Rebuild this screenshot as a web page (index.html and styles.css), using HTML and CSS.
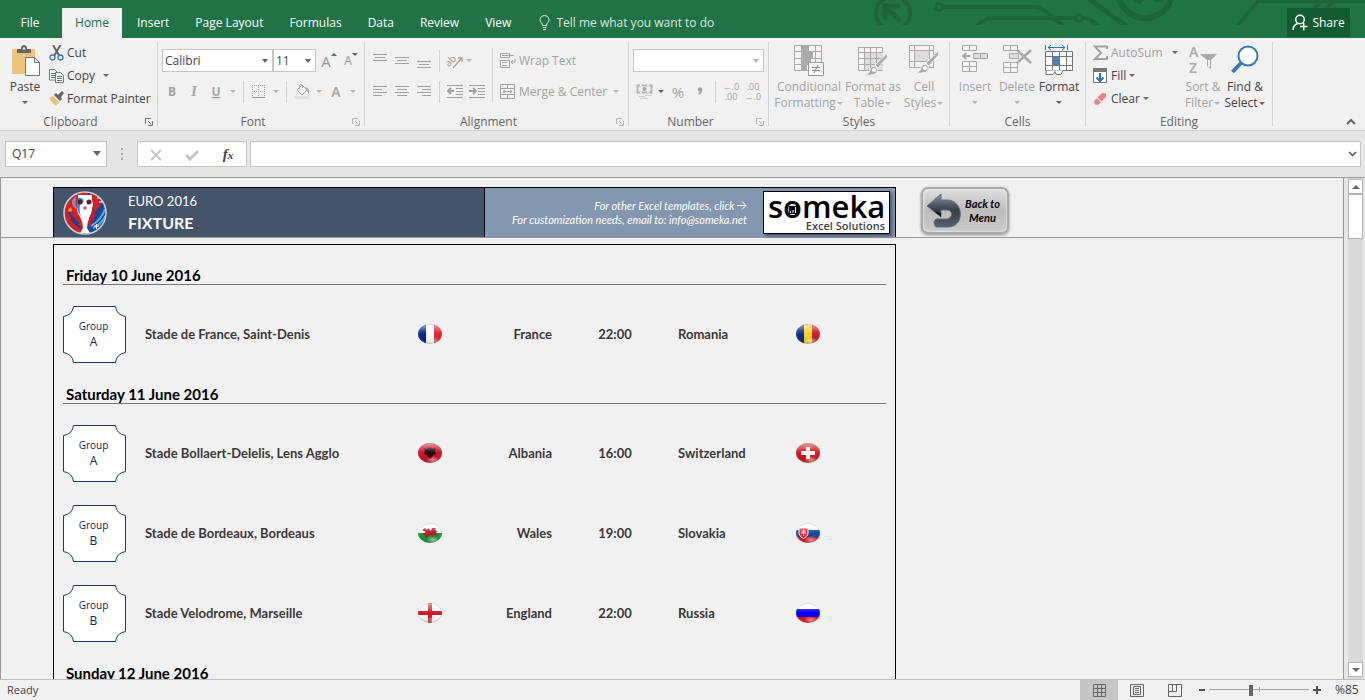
FILE: index.html
```html
<!DOCTYPE html>
<html lang="en">
<head>
  <meta charset="utf-8">
  <title>EURO 2016 Fixture - Excel</title>
  <link rel="stylesheet" href="styles.css">
</head>
<body>
  <svg class="defs" aria-hidden="true">
    <symbol id="badge" viewBox="0 0 63 57"><path d="M10.500.5H52.500Q53.500 9 62.500 10.500V46.500Q53.500 48 52.500 56.500H10.500Q9.500 48 .5 46.500V10.500Q9.500 9 10.500.5Z" fill="#fff" stroke="#1f3864"/></symbol>
    <symbol id="launch" viewBox="0 0 8 8"><path d="M.5 6V.5H6M3 3l3.500 3.500M7.500 3v4.500H3" fill="none" stroke="currentColor"/></symbol>
    <clipPath id="ball"><ellipse cx="12" cy="10" rx="12" ry="10"/></clipPath>
    <linearGradient id="gloss" x1="0" y1="0" x2="0" y2="1"><stop offset="0" stop-color="#fff" stop-opacity=".6"/><stop offset=".4" stop-color="#fff" stop-opacity=".08"/><stop offset=".6" stop-color="#000" stop-opacity="0"/><stop offset="1" stop-color="#000" stop-opacity=".18"/></linearGradient>
    <radialGradient id="shine"><stop offset="0" stop-color="#fff" stop-opacity=".55"/><stop offset="1" stop-color="#fff" stop-opacity="0"/></radialGradient>
    <symbol id="glass" viewBox="0 0 24 20"><ellipse cx="12" cy="10" rx="12" ry="10" fill="url(#gloss)"/><ellipse cx="15" cy="17" rx="7" ry="4" fill="url(#shine)"/><ellipse cx="12" cy="10" rx="11.500" ry="9.500" fill="none" stroke="#888" stroke-opacity=".3"/></symbol>
  </svg>

  <header class="titlebar">
    <svg class="art" width="525" height="25" viewBox="0 0 525 25" fill="none" stroke="#1c653b" stroke-width="4">
      <circle cx="53" cy="13" r="17"/><path d="M60 21 46 7M45 20V6H60" stroke-width="5"/>
      <circle cx="99" cy="7" r="3.500" stroke-width="3"/><path d="M103 7H195Q200 7 204 10L223 26M137 26Q145 18 151 18H235M243 18Q250 18 259 26"/><circle cx="239" cy="18" r="3.500" stroke-width="3"/>
      <path d="M248-2 286 26" stroke-width="5"/><circle cx="305" cy="-9" r="27" stroke-width="6"/><path d="M294-2l5 4 9-8M313 0h8v-6" stroke-width="4"/>
      <path d="M397 26 418 1H525M474 9 484-2M486 9 496-2" stroke-width="4"/>
    </svg>
    <nav class="tabs">
      <button class="tab file">File</button>
      <button class="tab active">Home</button>
      <button class="tab">Insert</button>
      <button class="tab">Page Layout</button>
      <button class="tab">Formulas</button>
      <button class="tab">Data</button>
      <button class="tab">Review</button>
      <button class="tab">View</button>
      <button class="tell"><svg width="11" height="16" viewBox="0 0 11 16" fill="none" stroke="#d9eadf"><path d="M3.500 10.500C3.500 8 1 7.500 1 4.800A4.500 4.300 0 0 1 10 4.800C10 7.500 7.500 8 7.500 10.500ZM3.500 12.500h4M4 14.500h3"/></svg>Tell me what you want to do</button>
    </nav>
    <button class="share"><svg width="16" height="17" viewBox="0 0 16 17" fill="none" stroke="#fff" stroke-width="1.500"><circle cx="8" cy="5.500" r="4.300"/><path d="M1 16Q1 11 6 9.500M8 12.500h7.500M11.700 9v7.500"/></svg>Share</button>
  </header>

  <section class="ribbon">
    <div class="group clipboard">
      <div class="body">
        <button class="big paste">
          <svg width="30" height="32" viewBox="0 0 30 32"><path d="M2 4h23v25H2z" fill="#eec47c"/><path d="M7 8V4h4a3 4 0 0 1 6 0h4v4z" fill="#666"/><circle cx="14" cy="3.500" r="1.200" fill="#f1f1f1"/><path d="M15.500 12.500h9l5 5v13h-14z" fill="#fff" stroke="#777"/><path d="M24.500 12.500v5h5" fill="none" stroke="#777"/></svg>
          <span>Paste</span><i class="caret"></i>
        </button>
        <div class="list">
          <button><svg width="16" height="16" viewBox="0 0 16 16" fill="none"><path d="M4 0 10.500 11M11.500 0 5 11" stroke="#666" stroke-width="2"/><circle cx="3.500" cy="12.500" r="2.500" stroke="#3e78b3" stroke-width="1.300"/><circle cx="11.500" cy="12.500" r="2.500" stroke="#3e78b3" stroke-width="1.300"/></svg>Cut</button>
          <button><svg width="16" height="16" viewBox="0 0 16 16"><path d="M.5 1.500h5l2.500 2.500v8H.5z" fill="#fff" stroke="#777"/><path d="M2 5.500h4M2 7.500h4M2 9.500h4" stroke="#3e78b3"/><path d="M6.500 4.500h5l3 3v7h-8z" fill="#fff" stroke="#777"/><path d="M8 8.500h5M8 10.500h5M8 12.500h5" stroke="#3e78b3"/></svg>Copy <i class="caret far"></i></button>
          <button><svg width="16" height="16" viewBox="0 0 16 16"><path d="M0 7 4 5 10 11 7 15Q3 12 0 7Z" fill="#efc07e"/><path d="M5 4 7 2 9 4 13 0 15 2 12 6 13 8 11 10Z" fill="#666"/></svg>Format Painter</button>
        </div>
      </div>
      <footer>Clipboard<svg class="launch dark"><use href="#launch"/></svg></footer>
    </div>

    <div class="group font">
      <div class="body rows">
        <div class="row">
          <label class="pick name"><select aria-label="Font"><option>Calibri</option></select></label>
          <label class="pick size"><select aria-label="Font size"><option>11</option></select></label>
          <button class="ib grow" aria-label="Increase font size">A<i class="up"></i></button>
          <button class="ib shrink" aria-label="Decrease font size">A<i class="down"></i></button>
        </div>
        <div class="row off">
          <button class="ib"><b>B</b></button><button class="ib ital">I</button><button class="ib under">U</button><i class="caret"></i>
          <i class="sep"></i>
          <button class="ib" aria-label="Borders"><svg width="14" height="14" viewBox="0 0 14 14" fill="none" stroke="#aaa"><path d="M.5 0v12M6.500 0v12M12.500 0v12M0 .5h13M0 6.500h13" stroke-dasharray="1 1"/><path d="M0 12.500h13" stroke="#999"/></svg></button><i class="caret"></i>
          <i class="sep"></i>
          <button class="ib" aria-label="Fill color"><svg width="17" height="17" viewBox="0 0 17 17"><path d="M3 7 8 2 13 7 8 12Z" fill="#f6f1f4" stroke="#aaa"/><path d="M5.500 6V2a2 2 0 0 1 3 0v3" fill="none" stroke="#aaa"/><path d="M11 4Q16 5 15 11L12 7Z" fill="#aaa"/><path d="M0 13h15v3H0z" fill="#e2e2e2"/></svg></button><i class="caret"></i>
          <button class="ib tint">A</button><i class="caret"></i>
        </div>
      </div>
      <footer>Font<svg class="launch"><use href="#launch"/></svg></footer>
    </div>

    <div class="group align">
      <div class="body">
        <div class="rows">
          <div class="row">
            <button class="ib" aria-label="Top align"><svg width="14" height="14" viewBox="0 0 14 14" stroke="#a3a3a3"><path d="M0 .5h14M2 3.500h10M0 6.500h14"/></svg></button>
            <button class="ib" aria-label="Middle align"><svg width="14" height="14" viewBox="0 0 14 14" stroke="#a3a3a3"><path d="M0 3.500h14M2 6.500h10M0 9.500h14"/></svg></button>
            <button class="ib" aria-label="Bottom align"><svg width="14" height="14" viewBox="0 0 14 14" stroke="#a3a3a3"><path d="M0 7.500h14M2 10.500h10M0 13.500h14"/></svg></button>
            <i class="sep"></i>
            <button class="ib" aria-label="Orientation"><svg class="orient" width="16" height="16" viewBox="0 0 16 16" fill="none" stroke="#a3a3a3"><text x="-2" y="10" class="ab" transform="rotate(-45 5 8)">ab</text><path d="M6 15 15 5M11 5h4v4" stroke-width="1.300"/></svg></button><i class="caret off"></i>
          </div>
          <div class="row">
            <button class="ib" aria-label="Align left"><svg width="14" height="12" viewBox="0 0 14 12" stroke="#a3a3a3"><path d="M0 .5h14M0 3.500h9M0 6.500h14M0 9.500h9"/></svg></button>
            <button class="ib" aria-label="Center"><svg width="14" height="12" viewBox="0 0 14 12" stroke="#a3a3a3"><path d="M0 .5h14M2 3.500h10M0 6.500h14M2 9.500h10"/></svg></button>
            <button class="ib" aria-label="Align right"><svg width="14" height="12" viewBox="0 0 14 12" stroke="#a3a3a3"><path d="M0 .5h14M5 3.500h9M0 6.500h14M5 9.500h9"/></svg></button>
            <i class="sep"></i>
            <button class="ib" aria-label="Decrease indent"><svg width="16" height="14" viewBox="0 0 16 14" fill="none" stroke="#a3a3a3"><path d="M0 .5h16M9 3.500h7M9 6.500h7M9 9.500h7M0 12.500h16"/><path d="M7 6H1.500M4 3 1 6l3 3" stroke-width="2"/></svg></button>
            <button class="ib" aria-label="Increase indent"><svg width="16" height="14" viewBox="0 0 16 14" fill="none" stroke="#a3a3a3"><path d="M0 .5h16M9 3.500h7M9 6.500h7M9 9.500h7M0 12.500h16"/><path d="M0 6h5.500M4 3l3 3-3 3" stroke-width="2"/></svg></button>
          </div>
        </div>
        <i class="sep tall"></i>
        <div class="rows wide off">
          <button><svg width="16" height="16" viewBox="0 0 16 16" fill="#f6f1f4" stroke="#a3a3a3"><path d="M.5.5h9v4h-9zM.5 7.500h9v7h-9z"/><path d="M2 2.500h12M2 9.500h5M2 12.500h5M15 6v3h-4M13 7l-2 2 2 2" fill="none"/></svg>Wrap Text</button>
          <button><svg width="16" height="16" viewBox="0 0 16 16" fill="#f6f1f4" stroke="#a3a3a3"><path d="M.5.5h14v14H.5zM.5 4.500h14M.5 10.500h14M7.500.5v4M7.500 10.500v4"/><path d="M3 7.500h9M5 6 3 7.500 5 9M10 6l2 1.500L10 9" fill="none"/></svg>Merge &amp; Center <i class="caret end"></i></button>
        </div>
      </div>
      <footer>Alignment<svg class="launch"><use href="#launch"/></svg></footer>
    </div>

    <div class="group number">
      <div class="body rows">
        <div class="row"><label class="pick format off"><select aria-label="Number format"><option></option></select></label></div>
        <div class="row off">
          <button class="ib" aria-label="Accounting format"><svg width="17" height="16" viewBox="0 0 17 16"><path d="M1.500 1.500h14v7h-14z" fill="#f1f1f1" stroke="#b5b5b5" stroke-width="2"/><path d="M4 1.500h2M11 1.500h2M4 8.500h2M11 8.500h2" stroke="#f1f1f1" stroke-width="2"/><circle cx="8.500" cy="5" r="2" fill="#aaa"/><path d="M9 9.500h7M9 11.500h7M3 12.500h6M4 14.500h7" stroke="#d0d0d0"/></svg></button><i class="caret dark"></i>
          <button class="ib pct">%</button><button class="ib" aria-label="Comma style"><svg width="6" height="9" viewBox="0 0 6 9"><circle cx="3" cy="2.500" r="2.200" fill="#a3a3a3"/><path d="M4.500 2.500Q4.500 6 1.500 7" fill="none" stroke="#a3a3a3" stroke-width="1.500"/></svg></button>
          <i class="sep"></i>
          <button class="ib dec" aria-label="Increase decimal"><span>←.0</span><span>.00</span></button><button class="ib dec" aria-label="Decrease decimal"><span>.00</span><span>→.0</span></button>
        </div>
      </div>
      <footer>Number<svg class="launch"><use href="#launch"/></svg></footer>
    </div>

    <div class="group styles">
      <div class="body off">
        <button class="big w72">
          <svg width="30" height="32" viewBox="0 0 30 32" fill="#f8f3f6" stroke="#aaa"><path d="M.5.5h27v25H.5zM7.500.5v25M14.500.5v25M21.500.5v25M.5 6.500h27M.5 13.500h27M.5 19.500h27"/><path d="M8 1h6v5H8zM8 7h11v6H8zM8 14h9v5H8zM8 20h5v5H8z" fill="#aaa" stroke="none"/><path d="M14.500 17.500h15v13h-15z" fill="#fbf8fa" stroke="#999"/><path d="M18 22.500h8M18 25.500h8M24 20l-4 8" stroke="#888"/></svg>
          <span>Conditional<br>Formatting<i class="caret"></i></span>
        </button>
        <button class="big w56">
          <svg width="30" height="32" viewBox="0 0 30 32" fill="#f8f3f6" stroke="#aaa"><path d="M.5 2.500h24v23H.5z"/><path d="M7 8h18v17H7z" fill="#ddd" stroke="none"/><path d="M6.500 2.500v23M12.500 2.500v23M18.500 2.500v23M.5 7.500h24M.5 13.500h24M.5 19.500h24"/><path d="M29.500 8V12L20 23 17 20Z" fill="#aaa" stroke="#f1f1f1"/><path d="M6 30Q12 29 12 24 14 20 18 22 21 26 17 29 12 31 6 30Z" fill="#aaa" stroke="#f1f1f1"/><circle cx="16" cy="25" r="2" fill="#fff" stroke="none"/></svg>
          <span>Format as<br>Table<i class="caret"></i></span>
        </button>
        <button class="big w46">
          <svg width="30" height="32" viewBox="0 0 30 32" fill="#f8f3f6" stroke="#aaa"><path d="M.5.5h24v22H.5zM5.500.5v22M20.500.5v22M.5 5.500h24M.5 16.500h24"/><path d="M6 6h14v10H6z" fill="#ddd" stroke="none"/><path d="M29.500 6V10L20 21 17 18Z" fill="#aaa" stroke="#f1f1f1"/><path d="M6 28Q12 27 12 22 14 18 18 20 21 24 17 27 12 29 6 28Z" fill="#aaa" stroke="#f1f1f1"/><circle cx="16" cy="23" r="2" fill="#fff" stroke="none"/></svg>
          <span>Cell<br>Styles<i class="caret"></i></span>
        </button>
      </div>
      <footer>Styles</footer>
    </div>

    <div class="group cells">
      <div class="body">
        <button class="big w42 off">
          <svg width="28" height="32" viewBox="0 0 28 32" fill="#f8f3f6" stroke="#aaa"><path d="M1.500.5h14v5h-14zM8.500.5v5M1.500 16.500h14v10h-14zM8.500 16.500v10M1.500 21.500h14"/><path d="M12.500 8.500h14v5h-14zM19.500 8.500v5" fill="#ddd"/><path d="M9 11H3M5 8l-3 3 3 3" fill="none" stroke-width="2"/></svg>
          <span>Insert</span><i class="caret"></i>
        </button>
        <button class="big w42 off">
          <svg width="30" height="32" viewBox="0 0 30 32" fill="#f8f3f6" stroke="#aaa"><path d="M1.500.5h14v5h-14zM8.500.5v5M1.500 17.500h14v10h-14zM8.500 17.500v10M1.500 22.500h14"/><path d="M7.500 8.500h9v5h-9z" fill="#ddd"/><path d="M15 5 29 18M29 5 15 18" stroke-width="2.500"/></svg>
          <span>Delete</span><i class="caret"></i>
        </button>
        <button class="big w42">
          <svg width="28" height="32" viewBox="0 0 28 32" fill="#fff" stroke="#777"><path d="M.5 6.500h27v19H.5zM7.500 6.500v19M14.500 6.500v19M21.500 6.500v19M.5 11.500h27M.5 20.500h27"/><path d="M1 25.500v4h7l2-3 1 3h5l2-4"/><path d="M8 11.500h7v9H8z" fill="#4a7ebb" stroke="none"/><path d="M.5 0v5M22.500 0v5M3 2.500h17M6 0 3 2.500 6 5M17 0l3 2.500L17 5" fill="none" stroke="#2f75b5"/></svg>
          <span>Format</span><i class="caret"></i>
        </button>
      </div>
      <footer>Cells</footer>
    </div>

    <div class="group editing">
      <div class="body">
        <div class="list">
          <button class="off"><svg width="15" height="16" viewBox="0 0 15 16" fill="none" stroke="#a3a3a3" stroke-width="2"><path d="M14 4V1.500H2L8 8 2 14H14V11"/></svg>AutoSum <i class="caret dark far"></i></button>
          <button><svg width="15" height="16" viewBox="0 0 15 16"><path d="M.5.5h13v14H.5z" fill="#fff" stroke="#777"/><path d="M0 0h14v4H0z" fill="#777"/><path d="M7 5v8M3.500 9.500 7 13l3.500-3.500" fill="none" stroke="#2f75b5" stroke-width="2"/></svg>Fill<i class="caret"></i></button>
          <button><svg width="15" height="16" viewBox="0 0 15 16"><path d="M4.500 6.500 9 2l4 .5V6l-4.500 4.500z" fill="#e8808d"/><path d="M1 10 3.800 7.200 7.800 11.200 5 14 2 13.500z" fill="#e8808d"/></svg>Clear<i class="caret"></i></button>
        </div>
        <button class="big w42 off">
          <svg class="sort" width="30" height="32" viewBox="0 0 30 32"><text x="1" y="12" class="az">A</text><text x="1" y="28" class="az">Z</text><path d="M12 9H29L23 15V24L19 21V15Z" fill="#aaa"/><path d="M20 15h2v7h-2z" fill="#f1f1f1"/></svg>
          <span>Sort &amp;<br>Filter<i class="caret"></i></span>
        </button>
        <button class="big w42">
          <svg width="28" height="32" viewBox="0 0 28 32" fill="#fff" stroke="#3e78b3"><path d="M10 18 1.500 27" stroke-width="4"/><circle cx="17" cy="11" r="9.500" stroke-width="2"/></svg>
          <span>Find &amp;<br>Select<i class="caret"></i></span>
        </button>
      </div>
      <footer>Editing</footer>
    </div>
    <button class="collapse" aria-label="Collapse ribbon"><svg width="10" height="7" viewBox="0 0 10 7" fill="none" stroke="#666" stroke-width="2"><path d="M1 6l4-4 4 4"/></svg></button>
  </section>

  <section class="formula">
    <label class="pick cellname"><select aria-label="Name box"><option>Q17</option></select></label>
    <svg class="dots" width="2" height="12" viewBox="0 0 2 12" fill="#a6a6a6"><path d="M0 0h2v2H0zM0 5h2v2H0zM0 10h2v2H0z"/></svg>
    <div class="fx">
      <button aria-label="Cancel"><svg width="12" height="12" viewBox="0 0 12 12" stroke="#c6c6c6" stroke-width="2"><path d="M1 1l10 10M11 1 1 11"/></svg></button>
      <button aria-label="Enter"><svg width="14" height="12" viewBox="0 0 14 12" fill="none" stroke="#c6c6c6" stroke-width="3"><path d="M1 6l4 4 8-8"/></svg></button>
      <button class="fn"><em>f</em><small>x</small></button>
    </div>
    <div class="entry">
      <input type="text" aria-label="Formula bar">
      <svg width="9" height="6" viewBox="0 0 9 6" fill="none" stroke="#555" stroke-width="1.500"><path d="M1 1l3.500 3.500L8 1"/></svg>
    </div>
  </section>

  <main class="workbook">
    <div class="sheet">
      <div class="frozen">
        <div class="banner">
          <div class="title">
            <svg width="44" height="44" viewBox="0 0 44 44">
              <defs><clipPath id="round"><circle cx="22" cy="22" r="21"/></clipPath></defs>
              <g clip-path="url(#round)"><path d="M0 0h44v44H0z" fill="#d41f26"/><path d="M25 0Q48 8 44 44H24Z" fill="#134a96"/><path d="M27 1Q36 4 38 13L33 20 28 18Z" fill="#d41f26"/><path d="M14 4Q11 11 14 19Q8 15 9 9Z" fill="#7d91ba"/><path d="M42 18Q39 28 28 35M43 24Q38 34 30 37" stroke="#59afe5" stroke-width="2" fill="none"/><path d="M6 21Q9 28 16 33M8 27Q12 34 18 37" stroke="#1a438e" stroke-width="2" fill="none"/>
              <path d="M15 4H29Q28 8 30 13 30 20 27 26 24 32 24 37L27 42H17L20 37Q20 31 17 26 13 20 14 13 16 8 15 4Z" fill="#fff"/><path d="M15 7Q19 6 21 10L17 14Q16 21 18 25 13 19 14 13Z" fill="#2795d2"/><path d="M28 11Q31 18 26 27L25 34 27 36 32 24Z" fill="#cf1925"/><circle cx="17" cy="11" r="2.500" fill="#352540"/><circle cx="26" cy="11" r="2.500" fill="#5c2034"/><circle cx="22" cy="17" r="1.800" fill="#c65a64"/><path d="M5 19l3-3 1 4-3 1z" fill="#f4a31c"/><path d="M31 35h5M33.500 33v5M34 7h3M36 11h3" stroke="#fff"/></g>
              <circle cx="22" cy="22" r="21" fill="none" stroke="#c9ced6" stroke-width="1.500"/>
            </svg>
            <div><p>EURO 2016</p><h1>FIXTURE</h1></div>
          </div>
          <div class="promo">
            <p>For other Excel templates, click <svg width="10" height="9" viewBox="0 0 10 9" fill="none" stroke="#fff"><path d="M0 4.500h9M5 .5l4 4-4 4"/></svg><br>For customization needs, email to: info@someka.net</p>
            <a class="logo" href="#"><strong>s<span class="ring">o<svg width="8" height="8" viewBox="0 0 8 8"><path d="M0 0h8v8H0z"/><path d="M1.500 7V5M4 7V4M6.500 7V1" stroke="#fff"/></svg></span>meka</strong><small>Excel Solutions</small></a>
          </div>
        </div>
        <button class="back">
          <svg width="36" height="38" viewBox="0 0 36 38"><defs><linearGradient id="steel" x1="0" y1="0" x2="0" y2="1"><stop offset="0" stop-color="#8793a3"/><stop offset=".5" stop-color="#383c44"/><stop offset="1" stop-color="#59606b"/></linearGradient></defs><path d="M1 14 15 2V8H22C38 9 39 35 22 35H10Q6 30 10 27H21C27 26 27 18 21 18H15V25Z" fill="url(#steel)" stroke="#666f7b"/><path d="M8 19 15 21V25Z" fill="#111"/></svg>
          <span>Back to<br>Menu</span>
        </button>
      </div>

      <div class="pane">
        <div class="frame">
        <table class="fixture">
          <colgroup><col class="c-group"><col class="c-venue"><col class="c-flag"><col class="c-home"><col class="c-time"><col class="c-away"><col class="c-flag"><col class="c-rest"></colgroup>
          <tbody>
            <tr><th colspan="8"><h2>Friday 10 June 2016</h2></th></tr>
            <tr>
              <td><div class="badge"><svg><use href="#badge"/></svg><span>Group</span><b>A</b></div></td>
              <td>Stade de France, Saint-Denis</td>
              <td class="flag"><svg width="24" height="20" viewBox="0 0 24 20"><g clip-path="url(#ball)"><path d="M0 0h8v20H0z" fill="#06279b"/><path d="M8 0h8v20H8z" fill="#fff"/><path d="M16 0h8v20h-8z" fill="#ea2033"/></g><use href="#glass"/></svg></td>
              <td class="home">France</td><td class="time">22:00</td><td>Romania</td>
              <td class="flag"><svg width="24" height="20" viewBox="0 0 24 20"><g clip-path="url(#ball)"><path d="M0 0h8v20H0z" fill="#092d88"/><path d="M8 0h8v20H8z" fill="#fad11f"/><path d="M16 0h8v20h-8z" fill="#ce1a2b"/></g><use href="#glass"/></svg></td>
              <td></td>
            </tr>
          </tbody>
          <tbody>
            <tr><th colspan="8"><h2>Saturday 11 June 2016</h2></th></tr>
            <tr>
              <td><div class="badge"><svg><use href="#badge"/></svg><span>Group</span><b>A</b></div></td>
              <td>Stade Bollaert-Delelis, Lens Agglo</td>
              <td class="flag"><svg width="24" height="20" viewBox="0 0 24 20"><g clip-path="url(#ball)"><path d="M0 0h24v20H0z" fill="#cf1024"/><path d="M6 5l3 1 2-2 1 2 1-2 2 2 3-1-1 3 1 3-3 1-1 2-2 2-2-2-1-2-3-1 1-3z" fill="#1b0a0c"/></g><use href="#glass"/></svg></td>
              <td class="home">Albania</td><td class="time">16:00</td><td>Switzerland</td>
              <td class="flag"><svg width="24" height="20" viewBox="0 0 24 20"><g clip-path="url(#ball)"><path d="M0 0h24v20H0z" fill="#d8161d"/></g><use href="#glass"/><path d="M10 4h4v4h5v4h-5v4h-4v-4H5V8h5z" fill="#fff"/></svg></td>
              <td></td>
            </tr>
            <tr>
              <td><div class="badge"><svg><use href="#badge"/></svg><span>Group</span><b>B</b></div></td>
              <td>Stade de Bordeaux, Bordeaus</td>
              <td class="flag"><svg width="24" height="20" viewBox="0 0 24 20"><g clip-path="url(#ball)"><path d="M0 0h24v10H0z" fill="#fff"/><path d="M0 10h24v10H0z" fill="#159b38"/><path d="M4 7l3-2 2 2 1-2 3 3 1-3 4 0-1 2 2 1-1 2 1 3-3-1-1 3-2-3-3 1-1 2-2-1 1-2-3 1 1-3 2-1z" fill="#b81d30"/></g><use href="#glass"/></svg></td>
              <td class="home">Wales</td><td class="time">19:00</td><td>Slovakia</td>
              <td class="flag"><svg width="24" height="20" viewBox="0 0 24 20"><g clip-path="url(#ball)"><path d="M0 0h24v7H0z" fill="#fff"/><path d="M0 7h24v7H0z" fill="#0c4ba3"/><path d="M0 14h24v6H0z" fill="#e5172a"/><path d="M3 5h9v6Q11 14 7.500 15.500 4 14 3 11z" fill="#ee1c35" stroke="#fff"/><path d="M7.500 6v7M5.500 8h4M5 10h5" stroke="#fff"/></g><use href="#glass"/></svg></td>
              <td></td>
            </tr>
            <tr>
              <td><div class="badge"><svg><use href="#badge"/></svg><span>Group</span><b>B</b></div></td>
              <td>Stade Velodrome, Marseille</td>
              <td class="flag"><svg width="24" height="20" viewBox="0 0 24 20"><g clip-path="url(#ball)"><path d="M0 0h24v20H0z" fill="#fff"/><path d="M10 0h4v8h10v4H14v8h-4v-8H0V8h10z" fill="#d5142b"/></g><use href="#glass"/></svg></td>
              <td class="home">England</td><td class="time">22:00</td><td>Russia</td>
              <td class="flag"><svg width="24" height="20" viewBox="0 0 24 20"><g clip-path="url(#ball)"><path d="M0 0h24v7H0z" fill="#fff"/><path d="M0 6h24v8H0z" fill="#0000fa"/><path d="M0 14h24v6H0z" fill="#f00e18"/></g><use href="#glass"/></svg></td>
              <td></td>
            </tr>
          </tbody>
          <tbody>
            <tr><th colspan="8"><h2>Sunday 12 June 2016</h2></th></tr>
          </tbody>
        </table>
        </div>
      </div>
    </div>
    <div class="scroll">
      <button aria-label="Scroll up"><i class="up"></i></button>
      <div class="thumb"></div>
      <button class="bottom" aria-label="Scroll down"><i class="down"></i></button>
    </div>
  </main>

  <footer class="status">
    <span class="ready">Ready</span>
    <button class="view on" aria-label="Normal"><svg width="13" height="13" viewBox="0 0 13 13" fill="none" stroke="#666"><path d="M.5.5h12v12H.5zM4.500.5v12M8.500.5v12M.5 4.500h12M.5 8.500h12"/></svg></button>
    <button class="view" aria-label="Page layout"><svg width="14" height="13" viewBox="0 0 14 13" fill="none" stroke="#666"><path d="M.5.5h13v12H.5zM3.500 2.500h7v8h-7zM5 4.500h4M5 6.500h4M5 8.500h4"/></svg></button>
    <button class="view" aria-label="Page break preview"><svg width="14" height="13" viewBox="0 0 14 13" fill="none" stroke="#666"><path d="M.5.5h13v12H.5zM.5 7.500h8M4.500.5v7M8.500.5v7"/></svg></button>
    <button class="zoom" aria-label="Zoom out"><svg width="6" height="8" viewBox="0 0 6 8" stroke="#555" stroke-width="2"><path d="M0 4h6"/></svg></button>
    <input type="range" min="0" max="100" value="42" aria-label="Zoom">
    <button class="zoom" aria-label="Zoom in"><svg width="8" height="8" viewBox="0 0 8 8" stroke="#555" stroke-width="2"><path d="M0 4h8M4 0v8"/></svg></button>
    <span class="percent">%85</span>
  </footer>
</body>
</html>
```

FILE: styles.css
```css
* {
  box-sizing: border-box;
}
body {
  margin: 0;
  height: 100vh;
  display: flex;
  flex-direction: column;
  overflow: hidden;
  background: #f1f1f1;
  color: #444;
  font-family: "Open Sans", "Noto Sans", sans-serif;
  font-size: 12px;
  line-height: 16px;
}
button {
  background: none;
  border: 0;
  padding: 0;
  margin: 0;
  color: inherit;
  font: inherit;
}
p, h1, h2 {
  margin: 0;
}
svg {
  flex: none;
}
.defs {
  position: absolute;
  width: 0;
  height: 0;
}

/* title bar */
.titlebar {
  position: relative;
  display: flex;
  justify-content: space-between;
  flex: 0 0 38px;
  background: #217346;
  color: #fff;
}
.art {
  position: absolute;
  top: 0;
  right: 0;
}
.tabs {
  display: flex;
  padding-top: 8px;
}
.tab {
  padding: 0 13px;
  white-space: nowrap;
}
.tab.file {
  width: 60px;
  margin-right: 2px;
}
.tab.active {
  width: 60px;
  margin-right: 2px;
  padding: 0;
  background: #f1f1f1;
  color: #217346;
}
.tell {
  display: flex;
  align-items: center;
  gap: 6px;
  padding-left: 15px;
  color: #d9eadf;
}
.share {
  position: relative;
  display: flex;
  align-items: center;
  justify-content: center;
  gap: 4px;
  width: 63px;
  margin: 8px 15px 1px 0;
  background: #115c30;
}

/* ribbon */
.ribbon {
  display: flex;
  flex: 0 0 93px;
  border-bottom: 1px solid #d2d2d2;
}
.group {
  display: flex;
  flex-direction: column;
  flex: none;
  margin: 4px 0;
  border-right: 1px solid #d2d2d2;
}
.clipboard { width: 158px; }
.font { width: 207px; }
.align { width: 264px; }
.number { width: 140px; }
.styles { width: 181px; }
.cells { width: 136px; }
.editing { width: 187px; }
.body {
  display: flex;
  flex: 1;
  padding-left: 4px;
}
.group footer {
  position: relative;
  height: 16px;
  margin-bottom: -4px;
  text-align: center;
  padding-right: 16px;
  color: #666;
}
.styles footer,
.cells footer,
.editing footer {
  padding-right: 0;
}
.launch {
  position: absolute;
  right: 4px;
  top: 4px;
  width: 8px;
  height: 8px;
  color: #b5b5b5;
}
.launch.dark {
  color: #777;
}
.off {
  color: #a3a3a3;
}
.caret, .up, .down {
  display: inline-block;
  flex: none;
  width: 12px;
}
.caret::before, .down::before, .up::before {
  content: "";
  display: block;
  width: 0;
  margin: 0 auto;
  border: 3px solid transparent;
  border-top-color: #666;
  border-bottom-width: 0;
}
.up::before {
  border-top-width: 0;
  border-bottom: 3px solid #666;
}
.scroll .up::before {
  border-width: 0 4px 4px;
}
.scroll .down::before {
  border-width: 4px 4px 0;
}
.off .caret::before, .caret.off::before {
  border-top-color: #b5b5b5;
}
.caret.dark.dark::before {
  border-top-color: #666;
}
.big {
  display: flex;
  flex-direction: column;
  align-items: center;
  padding-top: 3px;
}
.big span {
  margin-top: 2px;
  white-space: nowrap;
}
.big span .caret {
  vertical-align: middle;
  width: 8px;
}
.big > .caret {
  margin-top: 6px;
}
.big.paste { width: 42px; }
.w72 { width: 72px; }
.w56 { width: 56px; }
.w46 { width: 46px; }
.w42 { width: 42px; }
.list {
  display: flex;
  flex-direction: column;
  margin-top: -1px;
}
.clipboard .list {
  padding-left: 3px;
}
.list button {
  display: flex;
  align-items: center;
  gap: 3px;
  height: 23px;
  white-space: nowrap;
}
.clipboard .list button {
  gap: 2px;
}
.list .caret {
  width: 6px;
}
.list .far {
  margin-left: 6px;
}
.rows {
  display: flex;
  flex-direction: column;
  padding-top: 3px;
}
.row {
  display: flex;
  align-items: center;
  height: 31px;
}
.ib {
  display: flex;
  align-items: center;
  justify-content: center;
  width: 22px;
  height: 24px;
}
.ital {
  font-family: "Liberation Serif", serif;
  font-size: 14px;
  font-style: italic;
  font-weight: bold;
}
.under {
  font-weight: bold;
  text-decoration: underline;
}
.tint {
  font-size: 14px;
  font-weight: 600;
}
.sep {
  width: 1px;
  height: 22px;
  margin: 0 4px;
  background: #d2d2d2;
}
.sep.tall {
  height: 54px;
  margin: 6px 7px 0 3px;
}
.pick {
  position: relative;
  display: block;
  height: 23px;
  background: #fff;
  border: 1px solid #c6c6c6;
}
.pick::after {
  content: "";
  position: absolute;
  right: 4px;
  top: 9px;
  border: 3px solid transparent;
  border-top: 4px solid #666;
  border-bottom: 0;
}
.pick.off::after {
  border-top-color: #b5b5b5;
}
.pick select {
  appearance: none;
  width: 100%;
  height: 100%;
  padding: 0 2px;
  border: 0;
  background: none;
  color: #444;
  font: inherit;
}
.pick.name { width: 111px; }
.pick.size { width: 43px; }
.pick.format { width: 131px; }
.grow, .shrink {
  align-items: center;
  color: #999;
}
.grow {
  margin-left: 2px;
  font-size: 15px;
}
.grow i, .shrink i {
  width: 6px;
  margin-bottom: 12px;
}
.font .row.off, .align .rows .row {
  margin-left: -1px;
}
.align .body {
  padding-left: 5px;
}
.align .body > .rows:first-child {
  width: 119px;
}
.orient, .sort {
  overflow: visible;
}
.ab {
  font: 10px "Open Sans", sans-serif;
  fill: #999;
  stroke: none;
}
.row > .caret.off {
  margin-left: -3px;
}
.wide button {
  display: flex;
  align-items: center;
  gap: 3px;
  height: 31px;
  white-space: nowrap;
}
.pct {
  font-size: 15px;
}
.dec {
  flex-direction: column;
  font-size: 9px;
  line-height: 10px;
}
.styles .body, .cells .body {
  padding-left: 4px;
}
.editing .list {
  width: 89px;
}
.editing .body {
  padding-left: 7px;
}
.az {
  font: 600 14px "Open Sans", sans-serif;
  fill: #aaa;
}
.collapse {
  margin: auto 9px 1px auto;
}

/* formula bar */
.formula {
  display: flex;
  align-items: flex-start;
  flex: 0 0 46px;
  padding: 10px 4px 0 5px;
  background: #e6e6e6;
}
.cellname {
  width: 102px;
  height: 26px;
}
.cellname select {
  padding-left: 6px;
}
.cellname::after {
  right: 5px;
  border-width: 5px 4px 0;
}
.dots {
  margin: 7px 14px 0;
}
.fx, .entry {
  display: flex;
  height: 26px;
  background: #fff;
  border: 1px solid #c6c6c6;
}
.fx {
  width: 110px;
  margin-right: 3px;
}
.fx button {
  flex: 1;
}
.fx svg {
  vertical-align: middle;
}
.fn {
  font-family: "Liberation Serif", serif;
  font-size: 15px;
  font-weight: bold;
}
.fn small {
  font-size: 11px;
  font-style: italic;
}
.entry {
  flex: 1;
  align-items: center;
  padding-right: 3px;
}
.entry input {
  flex: 1;
  border: 0;
  outline: 0;
  background: none;
}

/* worksheet */
.workbook {
  display: flex;
  flex: 1;
  min-height: 0;
  border-top: 1px solid #999;
}
.sheet {
  display: flex;
  flex-direction: column;
  flex: 1;
  border-left: 1px solid #999;
  border-right: 1px solid #999;
  font-family: Lato, "Open Sans", sans-serif;
}
.frozen {
  display: flex;
  flex: 0 0 60px;
  padding: 9px 0 0 52px;
  border-bottom: 1px solid #999;
}
.banner {
  display: flex;
  width: 843px;
  border: 1px solid #000;
  border-bottom: 0;
  color: #fff;
}
.title {
  display: flex;
  align-items: center;
  gap: 21px;
  width: 431px;
  padding-left: 9px;
  background: #44546a;
  border-right: 1px solid #000;
}
.title p {
  font-size: 13px;
  line-height: 20px;
}
.title h1 {
  font-size: 16px;
  line-height: 24px;
}
.promo {
  display: flex;
  align-items: center;
  justify-content: flex-end;
  flex: 1;
  gap: 16px;
  padding-right: 5px;
  background: #8497b0;
  text-align: right;
  font-size: 11px;
  font-style: italic;
  line-height: 14px;
}
.logo {
  display: flex;
  flex-direction: column;
  width: 127px;
  height: 43px;
  padding: 0 4px;
  background: #fff;
  border: 1px solid #000;
  box-shadow: 2px 2px 3px #45536a;
  color: #000;
  font-family: "Open Sans", sans-serif;
  font-style: normal;
  text-decoration: none;
}
.logo strong {
  font-size: 31px;
  font-weight: 600;
  line-height: 28px;
  text-align: left;
}
.logo small {
  font-size: 11px;
  font-weight: 600;
  line-height: 11px;
  color: #444;
}
.ring {
  position: relative;
}
.ring svg {
  position: absolute;
  left: 6px;
  top: 21px;
}
.back {
  display: flex;
  align-items: center;
  gap: 3px;
  width: 88px;
  height: 47px;
  margin-left: 25px;
  padding-left: 3px;
  border: 2px solid #a9a9a9;
  border-radius: 7px;
  background: linear-gradient(#dedede, #bcbcbc 50%, #c9c9c9);
  box-shadow: 0 1px 3px #888, inset 0 0 3px #fff;
  color: #000;
  font-size: 11px;
  font-style: italic;
  font-weight: bold;
  line-height: 14px;
}
.pane {
  flex: 1;
  min-height: 0;
  overflow: hidden;
  width: 895px;
  padding: 6px 0 0 52px;
}
.frame {
  min-height: 100%;
  padding: 10px 9px 20px;
  border: 1px solid #000;
}
.fixture {
  width: 100%;
  border-spacing: 0;
  table-layout: fixed;
  font-size: 13px;
  font-weight: bold;
  color: #3b3838;
}
.fixture th {
  padding: 0 0 9px;
  text-align: left;
}
.fixture h2 {
  height: 30px;
  padding: 11px 0 0 3px;
  border-bottom: 1px solid #777;
  color: #000;
  font-size: 15px;
  line-height: 18px;
}
.fixture td {
  height: 80px;
  padding: 0;
}
.c-group { width: 82px; }
.c-venue { width: 245px; }
.c-flag { width: 80px; }
.c-home { width: 82px; }
.c-time { width: 126px; }
.c-away { width: 90px; }
.c-rest { width: 38px; }
.flag, .time {
  text-align: center;
}
.flag svg {
  vertical-align: middle;
}
.home {
  text-align: right;
}
.badge {
  position: relative;
  display: flex;
  flex-direction: column;
  align-items: center;
  justify-content: center;
  width: 63px;
  height: 57px;
  padding-right: 2px;
  color: #0f2660;
  font-family: "Open Sans", sans-serif;
  font-weight: normal;
}
.badge svg {
  position: absolute;
  left: 0;
  top: 0;
  width: 63px;
  height: 57px;
}
.badge span, .badge b {
  position: relative;
  font-weight: normal;
  line-height: 15px;
}
.badge span {
  font-size: 10px;
}
.badge b {
  font-size: 12px;
}
.scroll {
  display: flex;
  flex-direction: column;
  width: 21px;
  padding: 1px 2px 2px 4px;
  background: linear-gradient(90deg, #e6e6e6 4px, #dadada 4px, #dadada 19px, #e6e6e6 19px);
}
.scroll button, .thumb {
  flex: none;
  height: 15px;
  background: #fff;
  border: 1px solid #b5b5b5;
}
.scroll button {
  display: flex;
  align-items: center;
  justify-content: center;
}
.thumb {
  height: 45px;
}
.scroll .bottom {
  margin-top: auto;
}

/* status bar */
.status {
  display: flex;
  align-items: center;
  flex: 0 0 21px;
  border-top: 1px solid #bdbdbd;
}
.ready {
  flex: 1;
  padding-left: 7px;
  font-size: 11px;
}
.view {
  display: flex;
  align-items: center;
  justify-content: center;
  align-self: stretch;
  width: 38px;
}
.view.on {
  background: #c6c6c6;
}
.zoom {
  display: flex;
  align-items: center;
  justify-content: center;
  width: 15px;
}
.status input {
  appearance: none;
  width: 100px;
  height: 12px;
  margin: 0;
  background: linear-gradient(#a6a6a6, #a6a6a6) 0 5px / 100% 1px no-repeat, linear-gradient(#a6a6a6, #a6a6a6) 50% 3px / 1px 5px no-repeat;
}
.status input::-webkit-slider-thumb {
  appearance: none;
  width: 4px;
  height: 11px;
  background: #666;
}
.percent {
  width: 41px;
  padding-left: 11px;
}
```
